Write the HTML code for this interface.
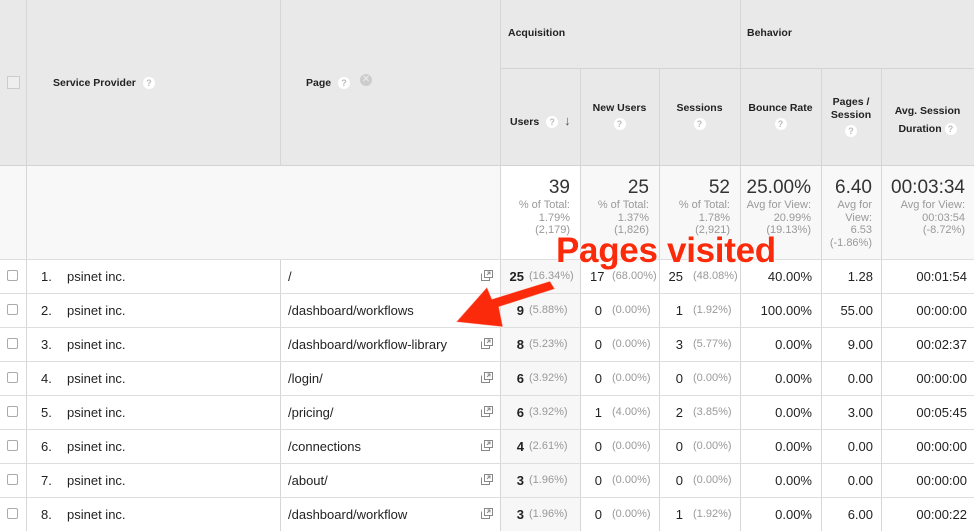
<!DOCTYPE html>
<html><head><meta charset="utf-8"><style>
*{margin:0;padding:0;box-sizing:border-box}
body{width:974px;height:531px;overflow:hidden;background:#fff;font-family:"Liberation Sans",Arial,sans-serif;position:relative;color:#222}
.a{position:absolute}
.vl{position:absolute;width:1px;background:#d6d6d6}
.hl{position:absolute;height:1px;background:#dedede}
.h{font-size:10.5px;font-weight:bold;color:#222}
.q{display:inline-block;width:12px;height:12px;border-radius:50%;background:#fff;color:#bbb;font-size:9px;text-align:center;line-height:12px;font-weight:bold;vertical-align:middle}
.cb{position:absolute;left:7px;width:11px;height:11px;border:1px solid #aaa;border-radius:2px;background:#fff}
.t{font-size:13px;position:absolute}
.p{font-size:11px;color:#999;position:absolute}
.big{font-size:19px;color:#333;position:absolute;text-align:right}
.sm{font-size:11px;color:#999;position:absolute;text-align:right;line-height:12.6px}
.ic{position:absolute;left:481px;width:12px;height:11px}
</style></head><body>
<div class="a" style="left:0;top:0;width:974px;height:166px;background:#e9e9e9"></div>
<div class="a" style="left:0;top:166px;width:974px;height:93px;background:#f8f8f8"></div>
<div class="a" style="left:500px;top:166px;width:80px;height:93px;background:#fff"></div>
<div class="a" style="left:0;top:259px;width:27px;height:272px;background:#fff"></div>
<div class="a" style="left:500px;top:259px;width:80px;height:272px;background:#f7f7f7"></div>
<div class="hl" style="left:0;top:165px;width:974px;background:#d3d3d3"></div>
<div class="hl" style="left:500px;top:68px;width:474px;background:#d3d3d3"></div>
<div class="vl" style="left:26px;top:0;height:531px"></div>
<div class="vl" style="left:280px;top:0;height:166px"></div>
<div class="vl" style="left:280px;top:259px;height:272px"></div>
<div class="vl" style="left:500px;top:0;height:531px"></div>
<div class="vl" style="left:740px;top:0;height:531px"></div>
<div class="vl" style="left:580px;top:68px;height:463px"></div>
<div class="vl" style="left:659px;top:68px;height:463px"></div>
<div class="vl" style="left:821px;top:68px;height:463px"></div>
<div class="vl" style="left:881px;top:68px;height:463px"></div>
<div class="hl" style="left:0;top:259px;width:974px"></div>
<div class="hl" style="left:0;top:293px;width:974px"></div>
<div class="hl" style="left:0;top:327px;width:974px"></div>
<div class="hl" style="left:0;top:361px;width:974px"></div>
<div class="hl" style="left:0;top:395px;width:974px"></div>
<div class="hl" style="left:0;top:429px;width:974px"></div>
<div class="hl" style="left:0;top:463px;width:974px"></div>
<div class="hl" style="left:0;top:497px;width:974px"></div>
<div class="a" style="left:7px;top:76px;width:13px;height:13px;border:1px solid #ccc;background:#eee"></div>
<div class="a h" style="left:53px;top:77px">Service Provider <span class="q" style="margin-left:4px">?</span></div>
<div class="a h" style="left:306px;top:77px">Page <span class="q" style="margin-left:4px">?</span></div>
<div class="a" style="left:360px;top:74px;width:12px;height:12px;border-radius:50%;background:#ccc;color:#eee;font-size:10px;text-align:center;line-height:12px">✕</div>
<div class="a h" style="left:508px;top:27px">Acquisition</div>
<div class="a h" style="left:747px;top:27px">Behavior</div>
<div class="a h" style="left:510px;top:113px">Users <span class="q" style="margin-left:4px">?</span><span style="margin-left:6px;color:#555;font-size:13px">↓</span></div>
<div class="a h" style="left:580px;top:102px;width:79px;text-align:center">New Users<br><span class="q" style="margin-top:4px">?</span></div>
<div class="a h" style="left:659px;top:102px;width:81px;text-align:center">Sessions<br><span class="q" style="margin-top:4px">?</span></div>
<div class="a h" style="left:740px;top:102px;width:81px;text-align:center">Bounce Rate<br><span class="q" style="margin-top:4px">?</span></div>
<div class="a h" style="left:821px;top:96px;width:60px;text-align:center;line-height:13px">Pages /<br>Session<br><span class="q" style="margin-top:3px">?</span></div>
<div class="a h" style="left:881px;top:102px;width:93px;text-align:center;line-height:18px">Avg. Session<br>Duration <span class="q">?</span></div>
<div class="big" style="left:500px;top:177px;width:70px">39</div>
<div class="sm" style="left:500px;top:199px;width:70px">% of Total:<br>1.79%<br>(2,179)</div>
<div class="big" style="left:580px;top:177px;width:69px">25</div>
<div class="sm" style="left:580px;top:199px;width:69px">% of Total:<br>1.37%<br>(1,826)</div>
<div class="big" style="left:659px;top:177px;width:71px">52</div>
<div class="sm" style="left:659px;top:199px;width:71px">% of Total:<br>1.78%<br>(2,921)</div>
<div class="big" style="left:740px;top:177px;width:71px">25.00%</div>
<div class="sm" style="left:740px;top:199px;width:71px">Avg for View:<br>20.99%<br>(19.13%)</div>
<div class="big" style="left:821px;top:177px;width:51px">6.40</div>
<div class="sm" style="left:821px;top:199px;width:51px">Avg for<br>View:<br>6.53<br>(-1.86%)</div>
<div class="big" style="left:881px;top:177px;width:84px">00:03:34</div>
<div class="sm" style="left:881px;top:199px;width:84px">Avg for View:<br>00:03:54<br>(-8.72%)</div>
<div id="rows"></div>
<script>
var d=[
["/","25","16.34%","17","68.00%","25","48.08%","40.00%","1.28","00:01:54",1],
["/dashboard/workflows","9","5.88%","0","0.00%","1","1.92%","100.00%","55.00","00:00:00",0],
["/dashboard/workflow-library","8","5.23%","0","0.00%","3","5.77%","0.00%","9.00","00:02:37",1],
["/login/","6","3.92%","0","0.00%","0","0.00%","0.00%","0.00","00:00:00",1],
["/pricing/","6","3.92%","1","4.00%","2","3.85%","0.00%","3.00","00:05:45",1],
["/connections","4","2.61%","0","0.00%","0","0.00%","0.00%","0.00","00:00:00",1],
["/about/","3","1.96%","0","0.00%","0","0.00%","0.00%","0.00","00:00:00",1],
["/dashboard/workflow","3","1.96%","0","0.00%","1","1.92%","0.00%","6.00","00:00:22",1]];
var h="";
d.forEach(function(r,i){var y=259+i*34,ty=y+10;
h+='<div class="cb" style="top:'+(y+11)+'px"></div>';
h+='<div class="t" style="left:41px;top:'+ty+'px">'+(i+1)+'.</div>';
h+='<div class="t" style="left:67px;top:'+ty+'px">psinet inc.</div>';
h+='<div class="t" style="left:288px;top:'+ty+'px">'+r[0]+'</div>';
if(r[10])h+='<svg class="ic" style="top:'+(y+11)+'px" viewBox="0 0 12 11"><rect x="3.5" y="0.5" width="8" height="7" fill="#fff" stroke="#888"/><path d="M0.5 3.5v7h8v-3" fill="none" stroke="#888"/><path d="M6 5l3-3M6.5 2h2.5v2.5" stroke="#888" fill="none"/></svg>';
h+='<div class="t" style="left:500px;width:24px;text-align:right;font-weight:bold;top:'+ty+'px">'+r[1]+'</div>';
h+='<div class="p" style="left:529px;top:'+(ty+1)+'px">('+r[2]+')</div>';
h+='<div class="t" style="left:590px;width:12px;text-align:right;top:'+ty+'px">'+r[3]+'</div>';
h+='<div class="p" style="left:612px;top:'+(ty+1)+'px">('+r[4]+')</div>';
h+='<div class="t" style="left:668px;width:15px;text-align:right;top:'+ty+'px">'+r[5]+'</div>';
h+='<div class="p" style="left:693px;top:'+(ty+1)+'px">('+r[6]+')</div>';
h+='<div class="t" style="left:740px;width:72px;text-align:right;top:'+ty+'px">'+r[7]+'</div>';
h+='<div class="t" style="left:821px;width:52px;text-align:right;top:'+ty+'px">'+r[8]+'</div>';
h+='<div class="t" style="left:881px;width:86px;text-align:right;top:'+ty+'px">'+r[9]+'</div>';
});
document.getElementById("rows").innerHTML=h;
</script>
<svg class="a" style="left:0;top:0" width="974" height="531">
<path d="M550 281 L555 289 L499 307 L503 327 L456 322 L487 287 L492 299 Z" fill="#fb2a0b" stroke="#fff" stroke-width="1" stroke-opacity="0.6"/>
</svg>
<div class="a" style="left:556px;top:231px;font-size:35px;font-weight:bold;color:#fb2a0b;letter-spacing:-0.3px;text-shadow:0 0 2px #fff,0 0 2px #fff">Pages visited</div>
</body></html>
